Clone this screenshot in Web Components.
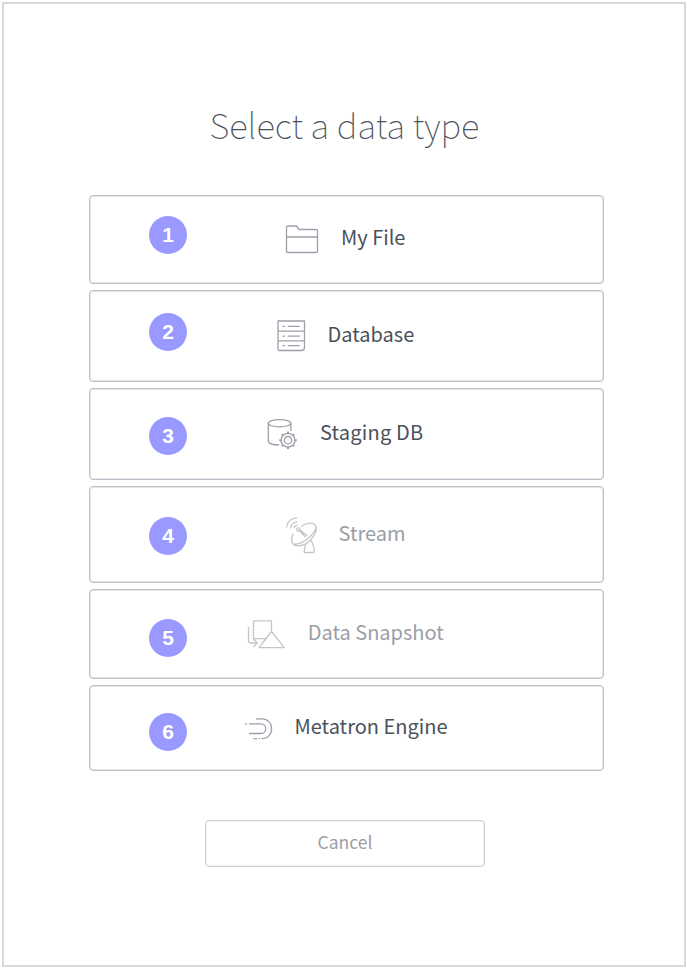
<!DOCTYPE html>
<html lang="en">
<head>
<meta charset="utf-8">
<title>Select a data type</title>
<style>
html,body{margin:0;background:#fff}
body{font-family:"Noto Sans CJK JP","Noto Sans",sans-serif;color:#4b515b;height:968px;overflow:hidden}
</style>
</head>
<body>
<type-dialog>
  <span slot="title">Select a data type</span>
  <type-card number="1" icon="folder" style="--h:89px;--gap:6px;--bt:21px;--il:98px;--it:27px;--ll:18px;--lt:26px">My File</type-card>
  <type-card number="2" icon="database" style="--h:92px;--gap:6px;--bt:23px;--il:88px;--it:27px;--ll:14.5px;--lt:28px">Database</type-card>
  <type-card number="3" icon="staging" style="--h:92px;--gap:6px;--bt:29px;--il:78px;--it:27px;--ll:17px;--lt:28px;--ls:.2px">Staging DB</type-card>
  <type-card number="4" icon="stream" disabled style="--h:97px;--gap:6px;--bt:31px;--il:98px;--it:28px;--ll:15.5px;--lt:31px">Stream</type-card>
  <type-card number="5" icon="snapshot" disabled style="--h:90px;--gap:6px;--bt:30px;--il:60px;--it:28px;--ll:22.7px;--lt:27px">Data Snapshot</type-card>
  <type-card number="6" icon="engine" style="--h:86px;--gap:0px;--bt:28px;--il:57px;--it:30px;--ll:12.5px;--lt:25px">Metatron Engine</type-card>
  <cancel-button slot="footer">Cancel</cancel-button>
</type-dialog>
<script>
const icons = {
  folder: '<path d="M1.5 26.5V2.2Q1.5 1 2.7 1H11.5L14 4.5H31.3Q32.5 4.5 32.5 5.7V26.3Q32.5 27.5 31.3 27.5H2.7Q1.5 27.5 1.5 26.5ZM1.5 12H32.5"/>',
  database: '<path d="M3 1H29.5V27.5Q29.5 30.5 26.5 30.5H4.5Q3 30.5 3 29ZM3 11.2H29.5M3 20.8H29.5"/><path d="M7.5 6.3H10M12.7 6.3H24.7M7.5 16.2H10M12.7 16.2H24.7M7.5 25.6H10M12.7 25.6H24.7"/>',
  staging: '<ellipse cx="14.6" cy="5.2" rx="11.3" ry="3.6"/><path d="M3.3 5.2V23.5Q4.5 27 14 27M25.9 5.2V13"/><circle cx="23" cy="22.2" r="6.9"/><circle cx="23" cy="22.2" r="3.7"/><path stroke-width="2" d="M23 13.5V15.3M23 29.1V31M14.3 22.2H16.1M29.9 22.2H31.8M16.9 16.1L18.1 17.3M27.9 27.1L29.1 28.3M16.9 28.3L18.1 27.1M27.9 17.3L29.1 16.1"/>',
  stream: '<path d="M16 9.5C22 5 29.5 5 31 9.5C32.5 15 26 26.5 16 28.5C12.5 29.2 9.5 29 8.5 27.5C6.5 25 6.2 20.5 8.5 16.5M31 9.5C30.5 16 20 27 8.8 27.5M14.3 13.5L20.5 20M14.8 13L22.5 19M1.5 10.5Q2.5 1.5 12 .8M5.5 11.3Q6.5 5.5 12.3 4.8M9 11.3Q9.5 8.5 12.2 8.2M20.8 27L19.3 33Q18.5 35.5 20.8 35.5H27.5Q29.8 35.5 29.2 33Q28.8 28.5 26.3 23.5"/><circle cx="13.3" cy="12.4" r="1.6"/>',
  snapshot: '<path d="M19 18.7H6.5V.8H24.5V11.5M24.5 11.5L12 27.6H37.3ZM1.5 7V20.5Q1.5 23 3.5 23H10M6.3 19L10.3 23L6.3 27"/>',
  engine: '<path d="M12 .8H17.5C31 .8 31 20.7 17.5 20.7M5 5.8H16.5C23.5 5.8 23.5 15.5 16.5 15.5H5M1 5.8H3M9.5 20.7H13M14.5 20.7H16"/>'
};

customElements.define('type-icon', class extends HTMLElement {
  connectedCallback() {
    this.attachShadow({mode:'open'}).innerHTML = `<style>
      :host{display:block;width:38px;height:38px;flex:none}
      svg{display:block;fill:none;stroke:currentColor;stroke-width:1.3;stroke-linejoin:round}
    </style><svg width="38" height="38" viewBox="0 0 38 38">${icons[this.getAttribute('name')]}</svg>`;
  }
});

customElements.define('number-badge', class extends HTMLElement {
  connectedCallback() {
    this.attachShadow({mode:'open'}).innerHTML = `<style>
      :host{display:flex;align-items:center;justify-content:center;flex:none;width:38px;height:38px;border-radius:50%;
        background:#9999ff;color:#fff;font:bold 21px/37px "Liberation Sans",Arial,sans-serif}
      span{display:block;height:38px}
    </style><span><slot></slot></span>`;
  }
});

customElements.define('type-card', class extends HTMLElement {
  connectedCallback() {
    this.attachShadow({mode:'open'}).innerHTML = `<style>
      :host{display:flex;align-items:flex-start;box-sizing:border-box;height:var(--h);margin-bottom:var(--gap);
        border:1px solid #bfc0ca;border-radius:4px;box-shadow:inset 0 0 0 1px #e6e6eb;padding-left:59px}
      number-badge{margin-top:calc(var(--bt) - 1px)}
      type-icon{margin:calc(var(--it) + 2px) 0 0 var(--il);color:#9da0aa}
      .label{margin:var(--lt) 0 0 var(--ll);font-size:20px;line-height:30px;letter-spacing:var(--ls,0);white-space:nowrap}
      :host([disabled]) type-icon{color:#c3c5cb}
      :host([disabled]) .label{color:#9a9ea7}
    </style><number-badge>${this.getAttribute('number')}</number-badge>
    <type-icon name="${this.getAttribute('icon')}"></type-icon><span class="label"><slot></slot></span>`;
  }
});

customElements.define('cancel-button', class extends HTMLElement {
  connectedCallback() {
    this.attachShadow({mode:'open'}).innerHTML = `<style>
      :host{display:flex;justify-content:center;box-sizing:border-box;width:280px;height:47px;margin:49px 0 0 201px;
        border:1px solid #d0d1d8;border-radius:4px;box-shadow:inset 0 0 0 1px #efeff2;color:#9a9ea7;font-size:17.5px;line-height:42px}
    </style><slot></slot>`;
  }
});

customElements.define('type-dialog', class extends HTMLElement {
  connectedCallback() {
    this.attachShadow({mode:'open'}).innerHTML = `<style>
      :host{display:flow-root;box-sizing:border-box;width:684px;height:965px;margin:2px 0 0 2px;border:2px solid #d8d8d8}
      h1{margin:94px 0 0;height:97px;padding-left:1px;text-align:center;font-size:34.7px;line-height:52px;font-weight:100}
      .list{width:515px;margin-left:85px}
    </style><h1><slot name="title"></slot></h1><div class="list"><slot></slot></div><footer><slot name="footer"></slot></footer>`;
  }
});
</script>
</body>
</html>
